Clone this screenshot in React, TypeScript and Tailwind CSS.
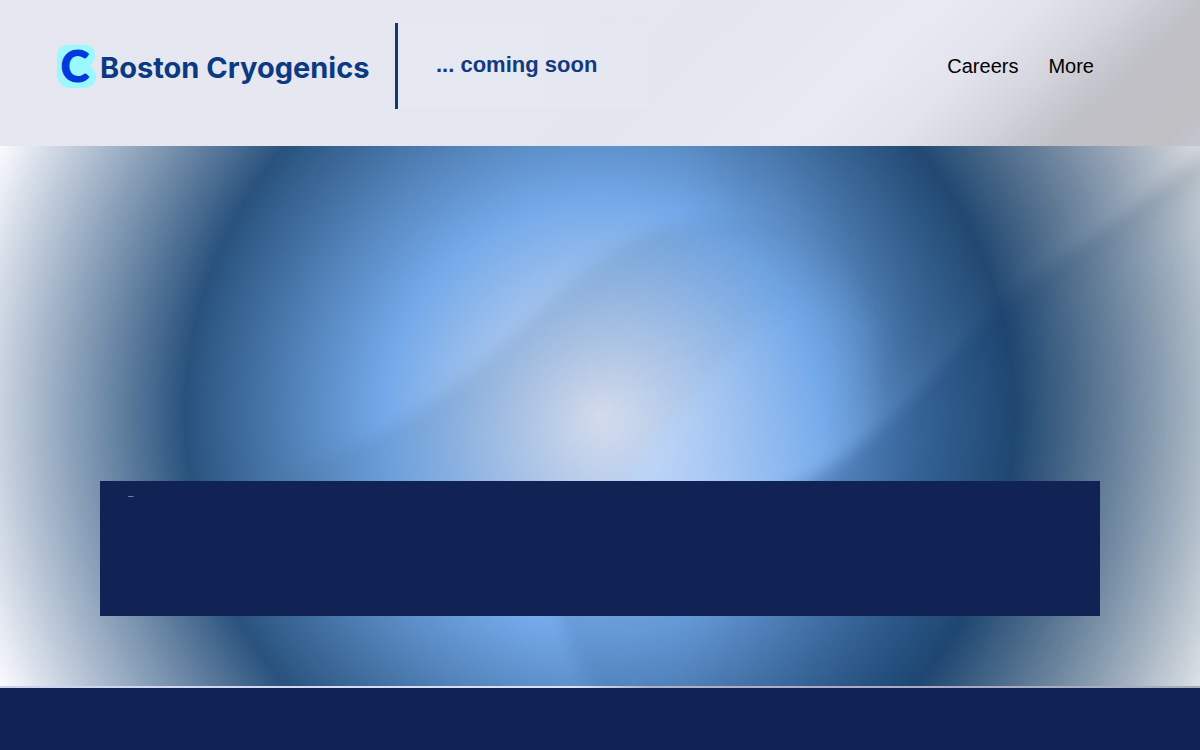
import React from 'react';

const links = ['Careers', 'More'];

const LogoMark: React.FC = () => (
  <div className="w-[44px] h-[48px] shrink-0 grid place-items-center">
    <svg viewBox="0 0 44 48" className="w-11 h-12 col-start-1 row-start-1" aria-hidden="true">
      <path
        d="M13 3H30C36 3 40 7 40 13C40 17 38 21 35 24C39 27 42 31 41 37C40 42 36 46 29 46H15C8 46 2 40 2 31V14C2 8 6 3 13 3Z"
        fill="#9cf8ff"
      />
    </svg>
    <span className="col-start-1 row-start-1 pr-1 font-['Lato','Open_Sans',sans-serif] font-black text-[43px] leading-[48px] text-[#0039dc] [-webkit-text-stroke:1px_#0039dc]">C</span>
  </div>
);

// soft folds of light and shade lying over the hero gradient
const Waves: React.FC = () => (
  <svg viewBox="0 0 1200 540" preserveAspectRatio="none" className="absolute inset-0 w-full h-full" aria-hidden="true">
    <defs>
      <filter id="soft" filterUnits="userSpaceOnUse" x="-100" y="-100" width="1400" height="740" colorInterpolationFilters="sRGB">
        <feGaussianBlur stdDeviation="8" />
      </filter>
      <filter id="softer" filterUnits="userSpaceOnUse" x="-100" y="-100" width="1400" height="740" colorInterpolationFilters="sRGB">
        <feGaussianBlur stdDeviation="18" />
      </filter>
      <linearGradient id="fold" gradientUnits="userSpaceOnUse" x1="560" y1="130" x2="680" y2="280">
        <stop offset="0" stopColor="#4c749c" stopOpacity="0.22" />
        <stop offset="1" stopColor="#4c749c" stopOpacity="0.03" />
      </linearGradient>
      <linearGradient id="glow" gradientUnits="userSpaceOnUse" x1="790" y1="160" x2="680" y2="340">
        <stop offset="0" stopColor="#7db4f4" stopOpacity="0" />
        <stop offset="1" stopColor="#bcd8ff" stopOpacity="0.45" />
      </linearGradient>
      <linearGradient id="shade" gradientUnits="userSpaceOnUse" x1="700" y1="440" x2="1200" y2="540">
        <stop offset="0" stopColor="#002858" stopOpacity="0.12" />
        <stop offset="0.4" stopColor="#002858" stopOpacity="0.3" />
        <stop offset="0.7" stopColor="#0a2c44" stopOpacity="0.22" />
        <stop offset="1" stopColor="#0a2c30" stopOpacity="0.12" />
      </linearGradient>
      <linearGradient id="veil" gradientUnits="userSpaceOnUse" x1="780" y1="0" x2="1200" y2="0">
        <stop offset="0" stopColor="#0a2c50" stopOpacity="0.06" />
        <stop offset="0.35" stopColor="#0a2c50" stopOpacity="0.24" />
        <stop offset="1" stopColor="#101820" stopOpacity="0.14" />
      </linearGradient>
    </defs>
    <path
      d="M230 335C390 310 470 230 550 155C620 90 690 60 770 75C830 90 860 130 870 170C830 150 780 150 740 190C700 240 660 290 620 345L600 400H230Z"
      fill="url(#fold)"
      filter="url(#soft)"
    />
    <path d="M620 345C670 270 720 210 790 170C850 170 880 220 880 260C870 300 840 325 790 350L620 400Z" fill="url(#glow)" filter="url(#soft)" />
    <path d="M720 -60H1260V0C1130 70 1050 110 1000 158C960 200 910 245 850 300C905 210 880 110 720 60Z" fill="url(#veil)" filter="url(#softer)" />
    <path d="M780 345C870 310 920 240 1000 158C1060 110 1130 70 1260 -40V600H630C590 550 565 500 550 440H740Z" fill="url(#shade)" filter="url(#soft)" />
  </svg>
);

const Header: React.FC = () => (
  <header className="h-[146px] pt-[23px] pl-[55px] pr-[106px] flex items-start bg-[linear-gradient(137deg,#e4e6f0_0%,#e6e7f1_30%,#e5e5ef_55%,#e7e8f2_65%,#e8e9f3_70%,#e2e3ec_77%,#d3d4dc_83%,#c0c1c7_89%,#c0bfc4_97%,#c4c7d0_100%)]">
    <a href="#" className="h-[86px] w-[340px] flex items-center text-[#0b3a82]">
      <LogoMark />
      <span className="pt-1 pl-px font-['Inter',sans-serif] text-[29px] leading-9 font-bold whitespace-nowrap">Boston Cryogenics</span>
    </a>
    <div className="h-[86px] w-[3px] bg-[#0d3a78]" />
    <p className="h-[86px] w-[250px] pl-[38px] pb-0.5 flex items-center text-[22px] leading-8 font-bold text-[#14397f] bg-linear-to-r from-[#e6e8f2] to-[#e5e8f1]">
      ... coming soon
    </p>
    <nav className="h-[86px] ml-auto flex items-center gap-[30px] text-xl text-black">
      {links.map((l) => (
        <a key={l} href="#">{l}</a>
      ))}
    </nav>
  </header>
);

export default function App() {
  return (
    <div className="min-h-screen flex flex-col font-['Liberation_Sans',Arial,sans-serif] bg-[#112254]">
      <Header />
      <main>
        <section className="relative h-[540px] px-[100px] pb-[70px] flex flex-col justify-end overflow-hidden bg-[radial-gradient(circle_farthest-corner,#e1e5f3_0%,#73a9e9_33%,#29527d_63%,#fbfbff_100%)]">
          <Waves />
          <div className="relative h-[135px] pt-[7px] pl-7 bg-[#112254]">
            <p className="text-[10px] leading-4 text-[#8492cc]">–</p>
          </div>
        </section>
        <div className="h-0.5 bg-[linear-gradient(90deg,#c9d2ee,#dce2f6_48%,#b0b0ca_54%,#aaa9c4_80%,#a3b0bb)]" />
      </main>
      <footer className="flex-1 bg-[#112254]" />
    </div>
  );
}
